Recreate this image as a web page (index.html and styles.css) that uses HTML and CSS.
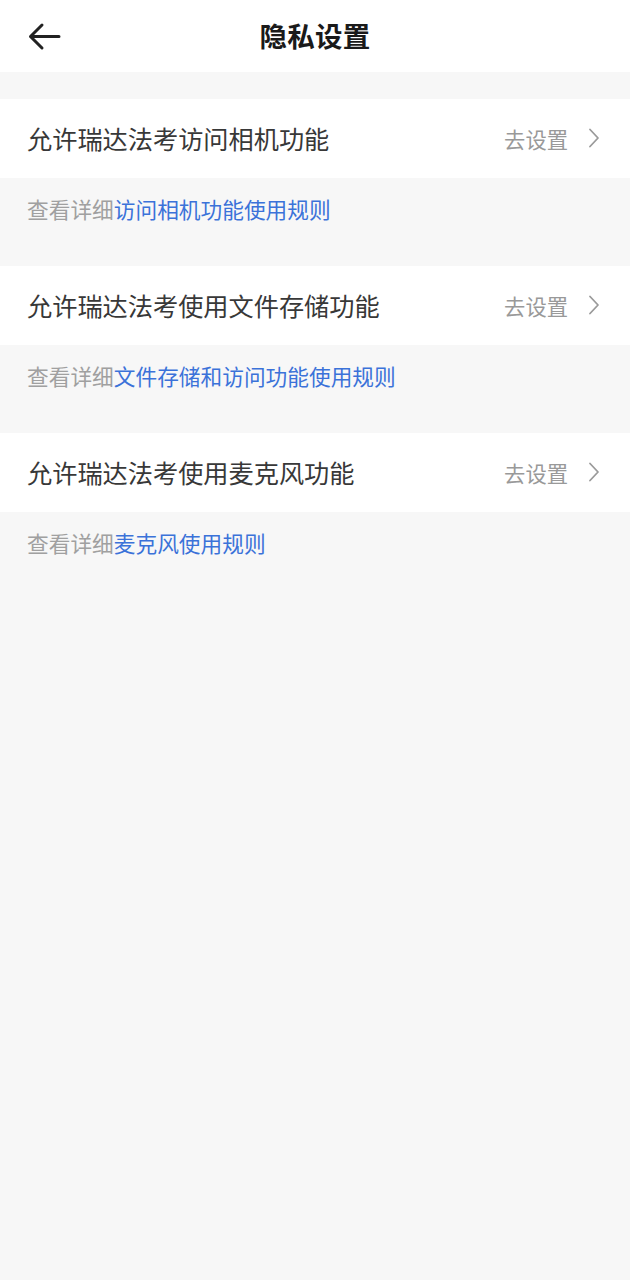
FILE: index.html
```html
<!DOCTYPE html>
<html lang="zh">
<head>
<meta charset="utf-8">
<link rel="stylesheet" href="styles.css">
</head>
<body>
<div class="page">
  <header class="nav">
    <svg class="back" width="34" height="30" viewBox="0 0 34 30"><path d="M32 14.5H3.5M15 3L3.5 14.5L15 26" fill="none" stroke="#222" stroke-width="3" stroke-linecap="round" stroke-linejoin="round"/></svg>
    <h1 class="title">隐私设置</h1>
  </header>
  <div class="list">
    <section class="group">
      <div class="row">
        <span class="label">允许瑞达法考访问相机功能</span>
        <span class="action">去设置<svg class="chev" width="12" height="20" viewBox="0 0 12 20"><path d="M2 1.5L10 10L2 18.5" fill="none" stroke="#9a9a9a" stroke-width="1.8" stroke-linecap="round" stroke-linejoin="round"/></svg></span>
      </div>
      <p class="note">查看详细<span class="link">访问相机功能使用规则</span></p>
    </section>
    <section class="group">
      <div class="row">
        <span class="label">允许瑞达法考使用文件存储功能</span>
        <span class="action">去设置<svg class="chev" width="12" height="20" viewBox="0 0 12 20"><path d="M2 1.5L10 10L2 18.5" fill="none" stroke="#9a9a9a" stroke-width="1.8" stroke-linecap="round" stroke-linejoin="round"/></svg></span>
      </div>
      <p class="note">查看详细<span class="link">文件存储和访问功能使用规则</span></p>
    </section>
    <section class="group">
      <div class="row">
        <span class="label">允许瑞达法考使用麦克风功能</span>
        <span class="action">去设置<svg class="chev" width="12" height="20" viewBox="0 0 12 20"><path d="M2 1.5L10 10L2 18.5" fill="none" stroke="#9a9a9a" stroke-width="1.8" stroke-linecap="round" stroke-linejoin="round"/></svg></span>
      </div>
      <p class="note">查看详细<span class="link">麦克风使用规则</span></p>
    </section>
  </div>
</div>
</body>
</html>
```

FILE: styles.css
```css
html, body {
  margin: 0;
  padding: 0;
  background: #f7f7f7;
  font-family: "Noto Sans CJK SC", "Noto Sans", sans-serif;
}
.page {
  width: 630px;
  min-height: 1280px;
  background: #f7f7f7;
}
.nav {
  position: relative;
  height: 72px;
  background: #fff;
  display: flex;
  align-items: center;
  justify-content: center;
}
.back {
  position: absolute;
  left: 27px;
  top: 22px;
}
.title {
  margin: 0;
  font-size: 27.5px;
  font-weight: 700;
  color: #1a1a1a;
  line-height: 1;
  letter-spacing: 0.3px;
}
.list {
  padding-top: 27px;
}
.group {
  margin: 0;
}
.row {
  height: 79px;
  background: #fff;
  display: flex;
  align-items: center;
  justify-content: space-between;
  padding: 0 30px 0 27px;
}
.label {
  font-size: 25.2px;
  color: #383838;
  line-height: 1;
}
.action {
  display: flex;
  align-items: center;
  font-size: 21.3px;
  color: #999;
  line-height: 1;
}
.chev {
  margin-left: 20px;
}
.note {
  margin: 0;
  height: 88px;
  box-sizing: border-box;
  padding: 18px 27px 0;
  font-size: 21.7px;
  line-height: 26px;
  color: #a0a0a0;
}
.link {
  color: #3b72d9;
}
```
